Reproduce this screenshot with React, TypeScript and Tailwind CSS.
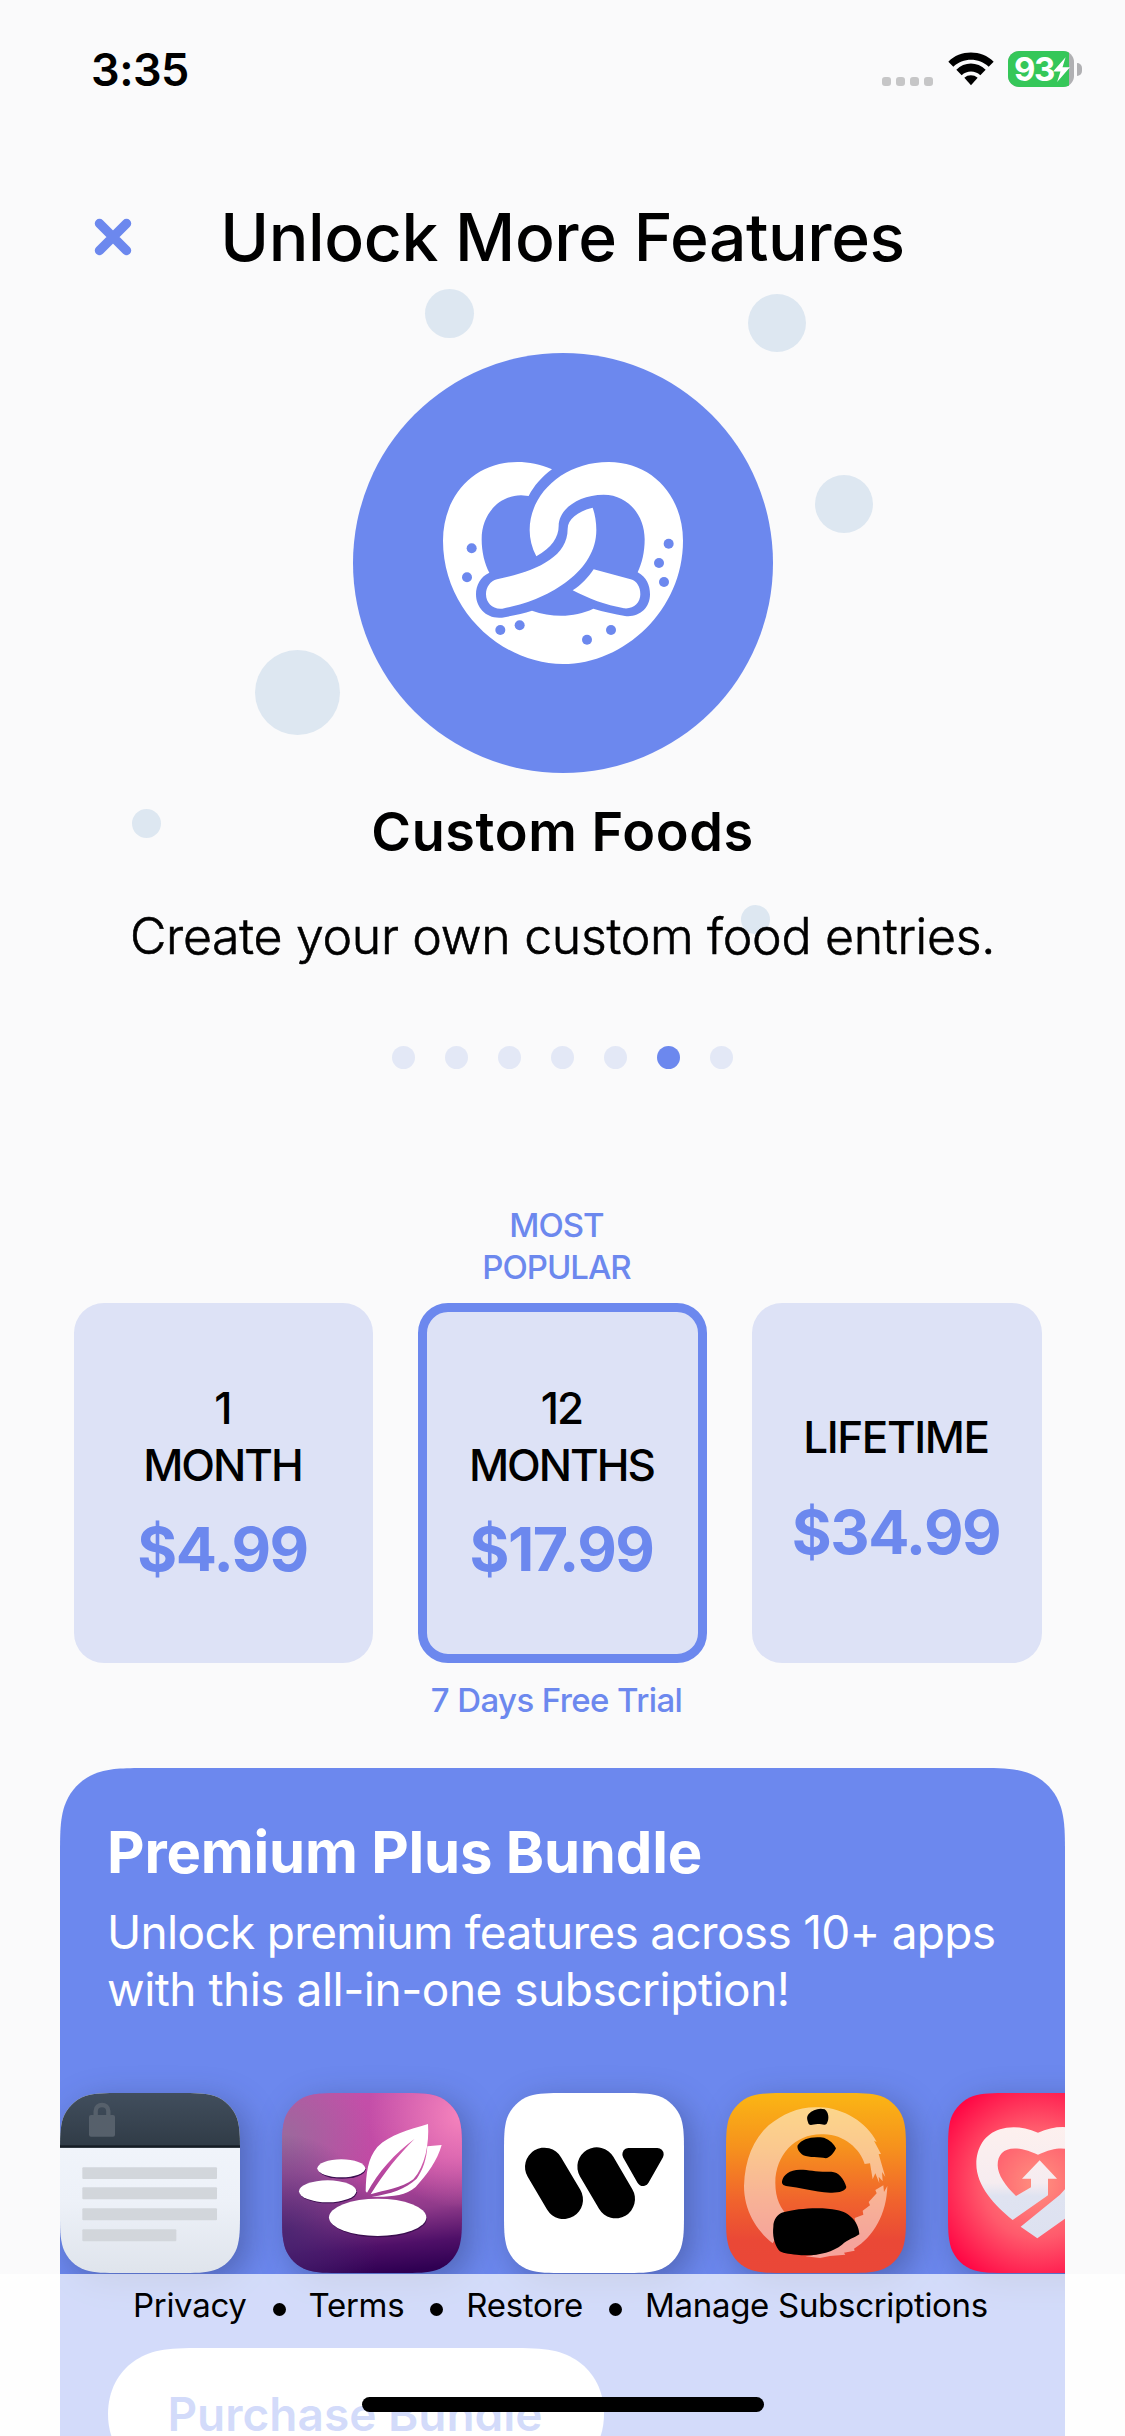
import type { ReactNode } from 'react';

interface Plan {
  id: number;
  title: string[];
  price: string;
  selected?: boolean;
}

const plans: Plan[] = [
  { id: 1, title: ['1', 'MONTH'], price: '$4.99' },
  { id: 2, title: ['12', 'MONTHS'], price: '$17.99', selected: true },
  { id: 3, title: ['LIFETIME'], price: '$34.99' },
];

const links = ['Privacy', 'Terms', 'Restore', 'Manage Subscriptions'];

const bubbles = [
  'left-[425px] top-[289px] size-[49px]',
  'left-[748px] top-[294px] size-[58px]',
  'left-[815px] top-[475px] size-[58px]',
  'left-[255px] top-[650px] size-[85px]',
  'left-[132px] top-[809px] size-[29px]',
  'left-[741px] top-[905px] size-[29px]',
];

const StatusBar = () => (
  <div className="flex h-[138px] shrink-0 items-center justify-between pl-[91px] pr-[43px]">
    <span className="text-[45px] font-semibold leading-none tracking-[-0.5px]">3:35</span>
    <div className="flex items-center">
      <div className="mt-6 flex gap-[5px]">
        {[0, 1, 2, 3].map((i) => (
          <span key={i} className="size-[9px] rounded-[3px] bg-[#c6c6c7]" />
        ))}
      </div>
      <svg viewBox="234 35 138 101" className="ml-[15px] h-[34px] w-[46px]">
        <path d="M235 64C270 27 335 27 371 64L356 79C327 51 279 51 250 79Z" strokeLinejoin="round" />
        <path d="M259 88C283 63 322 63 347 88L331 104C315 89 291 89 275 104Z" />
        <path d="M283 112C294 102 311 102 323 112L303 134Z" />
      </svg>
      <div className="relative ml-[14px] flex h-[36px] w-[66px] items-center overflow-hidden rounded-[11px] bg-[#b0b0b3]">
        <div className="absolute inset-y-0 left-0 w-[61px] bg-[#35c759]" />
        <span className="relative ml-[6px] text-[33px] font-bold leading-[34px] tracking-[-1.4px] text-white">93</span>
        <svg viewBox="554 50 50 74" className="absolute left-[45px] top-[6px] h-[25px] w-[17px]" fill="white">
          <path d="M591 51L554 93H576L566 124L604 80H582Z" />
        </svg>
      </div>
      <span className="ml-[3px] h-[13px] w-[5px] rounded-r-full bg-[#b0b0b3]" />
    </div>
  </div>
);

const Pretzel = () => (
  <svg viewBox="-6 -6 810 690" className="h-[230px] w-[270px]">
    <path
      fill="white"
      d="M366 58C330 42 298 36 262 36C130 36 39 140 39 272C39 480 215 642 399 642C583 642 759 480 759 272C759 140 668 36 536 36C400 36 299 132 299 240C299 266 305 292 319 319C365 293 386 262 386 228C386 178 445 134 521 134C594 134 644 196 644 268C644 306 636 340 623 367C650 382 660 407 660 433C660 474 628 503 585 498C552 492 521 485 490 476C434 503 366 503 306 482C278 491 250 497 216 503C170 508 138 474 138 433C138 406 151 380 178 368C164 342 155 306 155 268C155 196 202 138 273 136L296 138C312 107 336 80 366 58Z"
    />
    <path
      fill="white"
      d="M488 173C445 184 413 207 413 236C413 326 310 364 201 388C181 393 168 411 168 433C168 459 188 479 217 476C350 452 499 368 499 240C499 216 495 193 488 173Z"
    />
    <path
      fill="white"
      d="M491 358L602 388C621 393 631 411 631 433C631 458 611 478 582 475C526 465 476 446 428 421C454 405 473 384 491 358Z"
    />
    <g fill="#6c88ee">
      <circle cx="125" cy="295" r="15" />
      <circle cx="111" cy="382" r="15" />
      <circle cx="211" cy="540" r="15" />
      <circle cx="269" cy="526" r="15" />
      <circle cx="471" cy="569" r="15" />
      <circle cx="543" cy="540" r="15" />
      <circle cx="716" cy="281" r="15" />
      <circle cx="687" cy="339" r="15" />
      <circle cx="702" cy="396" r="15" />
    </g>
  </svg>
);

// Smooth-cornered app tile, children are drawn on a 540x540 canvas
const AppIcon = ({ id, children }: { id: string; children: ReactNode }) => (
  <svg
    viewBox="0 0 540 540"
    className="size-[180px] shrink-0 overflow-visible drop-shadow-[8px_8px_16px_rgba(30,40,80,0.36)]"
  >
    <clipPath id={`tile-${id}`}>
      <path d="M0 185C0 132 0 105 9 76C20 45 45 20 76 9C105 0 132 0 185 0H355C408 0 435 0 464 9C495 20 520 45 531 76C540 105 540 132 540 185V355C540 408 540 435 531 464C520 495 495 520 464 531C435 540 408 540 355 540H185C132 540 105 540 76 531C45 520 20 495 9 464C0 435 0 408 0 355Z" />
    </clipPath>
    <g clipPath={`url(#tile-${id})`}>{children}</g>
  </svg>
);

const NotesIcon = () => (
  <AppIcon id="notes">
    <defs>
      <linearGradient id="notes-top" x2="0" y2="1">
        <stop stopColor="#414e5d" />
        <stop offset="1" stopColor="#303b46" />
      </linearGradient>
      <linearGradient id="notes-page" x2="0" y2="1">
        <stop stopColor="#f3f7fc" />
        <stop offset=".6" stopColor="#edf1f8" />
        <stop offset="1" stopColor="#dfe4ec" />
      </linearGradient>
    </defs>
    <rect width="540" height="540" fill="url(#notes-page)" />
    <rect width="540" height="164" fill="url(#notes-top)" />
    <rect y="157" width="540" height="7" fill="#161d25" />
    <rect x="87" y="66" width="78" height="65" rx="6" fill="#56606b" />
    <path d="M107 68V54C107 30 145 30 145 54V68" fill="none" stroke="#56606b" strokeWidth="13" />
    <g fill="#d2d6db">
      <rect x="67" y="223" width="404" height="35" rx="3" />
      <rect x="67" y="283" width="404" height="36" rx="3" />
      <rect x="67" y="346" width="404" height="36" rx="3" />
      <rect x="67" y="409" width="282" height="36" rx="3" />
    </g>
  </AppIcon>
);

const SpaIcon = () => (
  <AppIcon id="spa">
    <defs>
      <linearGradient id="spa-bg" x1=".45" x2=".55" y2="1">
        <stop stopColor="#c44fa9" />
        <stop offset=".4" stopColor="#c14aa4" />
        <stop offset=".66" stopColor="#8f3a8a" />
        <stop offset=".85" stopColor="#4f1068" />
        <stop offset="1" stopColor="#2f0052" />
      </linearGradient>
      <radialGradient id="spa-pink" cx="1" cy=".12" r=".52">
        <stop stopColor="#f684bd" />
        <stop offset="1" stopColor="#f684bd" stopOpacity="0" />
      </radialGradient>
      <radialGradient id="spa-grey" cx="0" cy=".25" r=".5">
        <stop stopColor="#9a6a9c" />
        <stop offset="1" stopColor="#9a6a9c" stopOpacity="0" />
      </radialGradient>
      <radialGradient id="spa-dark" cx="0" cy=".78" r=".55">
        <stop stopColor="#43246f" stopOpacity=".85" />
        <stop offset="1" stopColor="#43246f" stopOpacity="0" />
      </radialGradient>
    </defs>
    <rect width="540" height="540" fill="url(#spa-bg)" />
    <rect width="540" height="540" fill="url(#spa-pink)" />
    <rect width="540" height="540" fill="url(#spa-grey)" />
    <rect width="540" height="540" fill="url(#spa-dark)" />
    <g transform="translate(-36 -39)">
      <g fill="#3b0f50">
        <ellipse cx="216" cy="268" rx="71" ry="28" />
        <ellipse cx="175" cy="337" rx="86" ry="33" />
        <ellipse cx="325" cy="416" rx="145" ry="56" />
      </g>
      <g fill="white">
        <ellipse cx="214" cy="265" rx="72" ry="27" />
        <ellipse cx="173" cy="334" rx="86" ry="33" />
        <ellipse cx="323" cy="412" rx="146" ry="56" />
        <path d="M474 132C478 190 466 258 430 298C395 325 345 330 302 343C340 280 385 225 434 176C374 220 325 275 291 338L287 334C288 280 293 235 322 201C360 163 416 150 474 132Z" />
        <path d="M472 199L515 195C503 240 470 285 437 321C405 349 360 351 305 350C360 343 408 326 440 296C459 270 470 235 472 199Z" />
      </g>
    </g>
  </AppIcon>
);

const WorkIcon = () => (
  <AppIcon id="work">
    <rect width="540" height="540" fill="white" />
    <g stroke="black" strokeLinecap="round" strokeLinejoin="round">
      <path d="M121 222L179 320" strokeWidth="116" />
      <path d="M278 221L335 318" strokeWidth="116" />
      <path d="M374 184H460L417 260Z" strokeWidth="38" />
    </g>
  </AppIcon>
);

const StonesIcon = () => (
  <AppIcon id="stones">
    <defs>
      <linearGradient id="stones-bg" x2="0" y2="1">
        <stop stopColor="#fbb614" />
        <stop offset=".3" stopColor="#f6921d" />
        <stop offset=".6" stopColor="#f0632d" />
        <stop offset=".82" stopColor="#ea4836" />
        <stop offset="1" stopColor="#ea4738" />
      </linearGradient>
    </defs>
    <rect width="540" height="540" fill="url(#stones-bg)" />
    <g transform="translate(-18 -39)">
      <g fill="white" fillOpacity=".5">
        <path d="M146 136C190 100 240 78 300 82C370 84 440 127 470 186L462 182L483 222L476 222L496 291L486 276L488 304L476 290L478 310L466 280L458 298L450 250L434 252C420 206 372 164 312 163C230 158 166 222 166 308C166 356 182 386 206 410L158 490C108 450 72 390 72 318C74 240 100 178 146 136Z" />
        <path d="M502 318C500 400 462 470 402 506L404 512L372 518L376 524L330 528L300 534L256 529C300 524 340 510 376 480L412 462L404 414L430 404L428 392L450 376L446 366L470 340L466 330L490 316L492 336Z" />
      </g>
      <path d="M266 102C278 90 296 83 314 88C326 96 329 118 320 131C314 137 306 132 293 132C280 132 272 139 266 132C262 120 258 112 266 102Z" />
      <path d="M233 196C246 176 276 168 312 173C330 180 342 192 348 205C342 218 332 232 318 235C296 230 268 234 250 226C238 218 230 206 233 196Z" />
      <path d="M186 304C190 284 208 270 240 269C270 269 290 277 334 275C356 276 372 296 379 321C376 334 356 339 330 338C280 336 240 322 198 318C188 316 185 310 186 304Z" />
      <path d="M160 440C160 420 172 402 190 397C230 384 310 380 350 390C390 396 418 430 418 463C402 474 384 478 366 494C334 520 280 530 230 524C206 522 184 520 176 510C162 490 157 464 160 440Z" />
    </g>
  </AppIcon>
);

const HeartIcon = () => (
  <AppIcon id="heart">
    <defs>
      <radialGradient id="heart-bg" cx=".5" cy=".5" r=".62">
        <stop stopColor="#ff9180" />
        <stop offset=".5" stopColor="#ff5a6c" />
        <stop offset="1" stopColor="#ff0443" />
      </radialGradient>
      <linearGradient id="heart-fill" x2="0" y2="1">
        <stop stopColor="#fdf0ee" />
        <stop offset=".5" stopColor="#f6ecf0" />
        <stop offset=".62" stopColor="#dfe3f1" />
        <stop offset="1" stopColor="#dde1f0" />
      </linearGradient>
    </defs>
    <rect width="540" height="540" fill="url(#heart-bg)" />
    <g transform="translate(-686 -39)">
      <path
        fill="url(#heart-fill)"
        d="M956 158C910 138 872 138 842 148C796 162 771 204 771 252C771 318 826 376 880 420L986 346V296H1013L961 241L908 296H935V322L890 348C858 318 835 284 835 256C835 208 876 188 956 224C1036 188 1076 208 1076 256C1076 284 1050 316 1022 344L904 440L954 475L1060 400C1110 352 1141 304 1141 252C1141 150 1046 118 956 158Z"
      />
    </g>
  </AppIcon>
);

const PlanCard = ({ plan }: { plan: Plan }) => {
  const single = plan.title.length === 1;

  return (
    <div
      className={`flex h-[360px] flex-col items-center justify-center rounded-[30px] bg-[#dde2f6] pr-0.5
        ${plan.selected ? 'border-[9px] border-[#6c88ee]' : ''} ${single ? 'pt-3' : ''}`}
    >
      {plan.title.map((line) => (
        <span
          key={line}
          className={`text-[44px] font-medium leading-[57px] ${single ? 'tracking-[-1.4px]' : 'tracking-[-2px]'}`}
        >
          {line}
        </span>
      ))}
      <span
        className={`text-[61px] font-bold leading-[73px] tracking-[-1.5px] text-[#6c88ee] ${single ? 'mt-[30px]' : 'mt-[19px]'}`}
      >
        {plan.price}
      </span>
    </div>
  );
};

const App = () => {
  return (
    <div className="relative flex h-[2436px] w-[1125px] flex-col overflow-hidden bg-[#fafafb] font-['Inter',sans-serif] text-black">
      {bubbles.map((position) => (
        <span key={position} className={`absolute rounded-full bg-[#dde7f1] ${position}`} />
      ))}

      <StatusBar />

      <header className="grid h-[198px] shrink-0 grid-cols-[205px_1fr_205px] items-center">
        <svg viewBox="0 0 38 38" className="ml-[94px] size-[38px]" stroke="#6c88ee" strokeWidth="9.5" strokeLinecap="round">
          <path d="M5.5 5.5L32.5 32.5M32.5 5.5L5.5 32.5" />
        </svg>
        <h1 className="whitespace-nowrap text-center text-[66px] font-medium leading-none tracking-[-0.4px]">
          Unlock More Features
        </h1>
      </header>

      <section className="relative flex shrink-0 flex-col items-center">
        <div className="mt-[17px] flex size-[420px] items-center justify-center rounded-full bg-[#6c88ee]">
          <Pretzel />
        </div>
        <h2 className="mt-[26px] text-[54px] font-semibold leading-[66px] tracking-[0.6px]">Custom Foods</h2>
        <p className="mt-[41px] whitespace-nowrap text-[50px] font-light leading-[60px] tracking-[-0.3px] [-webkit-text-stroke:0.6px_black]">
          Create your own custom food entries.
        </p>
        <div className="mt-[80px] flex gap-[30px]">
          {[0, 1, 2, 3, 4, 5, 6].map((i) => (
            <span key={i} className={`size-[23px] rounded-full ${i === 5 ? 'bg-[#6c88ee]' : 'bg-[#e3e8f6]'}`} />
          ))}
        </div>
      </section>

      <section className="mt-[135px] grid shrink-0 grid-cols-[299px_289px_290px] gap-x-[45px] pl-[74px] text-center">
        <p className="col-start-2 mb-[15px] px-16 pr-[76px] text-[33px] font-medium leading-[42px] tracking-[-1px] text-[#6c88ee]">
          MOST POPULAR
        </p>
        <div className="col-span-3 grid grid-cols-subgrid">
          {plans.map((plan) => (
            <PlanCard key={plan.id} plan={plan} />
          ))}
        </div>
        <p className="col-start-2 mt-[17px] pr-3 text-[33px] font-medium leading-10 tracking-[-0.6px] text-[#6c88ee]">
          7 Days Free Trial
        </p>
      </section>

      <section className="mx-[60px] mt-[48px] h-[760px] shrink-0 bg-[#6c88ee] pt-[49px] text-white [clip-path:path('M0_92C0_65_0_52_4.5_38C10_22_22_10_38_4.5C52_0_65_0_92_0H913C940_0_953_0_967_4.5C983_10_995_22_1000.5_38C1005_52_1005_65_1005_92V760H0Z')]">
        <h3 className="ml-[47px] whitespace-nowrap text-[58px] font-bold leading-[70px] tracking-[-0.2px]">
          Premium Plus Bundle
        </h3>
        <p className="ml-[47px] mt-[17px] whitespace-nowrap text-[46px] leading-[57px] tracking-[-0.68px]">
          Unlock premium features across 10+ apps
          <br />
          <span className="tracking-[-0.5px]">with this all-in-one subscription!</span>
        </p>
        <div className="mt-[75px] flex gap-[42px]">
          <NotesIcon />
          <SpaIcon />
          <WorkIcon />
          <StonesIcon />
          <HeartIcon />
        </div>
        <button className="ml-[48px] mt-[75px] flex h-[132px] w-[496px] items-center justify-center bg-white pr-0.5 text-[46px] font-semibold text-[#6c88ee] [clip-path:path('M0_66C0_42_11_24_25_14C42_2_56_0_95_0H401C440_0_454_2_471_14C485_24_496_42_496_66C496_90_485_108_471_118C454_130_440_132_401_132H95C56_132_42_130_25_118C11_108_0_90_0_66Z')]">
          Purchase Bundle
        </button>
      </section>

      <footer className="absolute inset-x-0 bottom-0 h-[162px] bg-white/70">
        <nav className="flex items-center pl-[133px] pt-[11px]">
          {links.map((link, index) => (
            <div key={link} className="flex items-center">
              {index > 0 && <span className="ml-[26px] mr-[23px] mt-2 size-[13px] rounded-full bg-black" />}
              <span className="whitespace-nowrap text-[33px] leading-10 tracking-[-0.3px]">{link}</span>
            </div>
          ))}
        </nav>
        <div className="absolute left-[362px] top-[123px] h-[15px] w-[402px] rounded-full bg-black" />
      </footer>
    </div>
  );
};

export default App;
